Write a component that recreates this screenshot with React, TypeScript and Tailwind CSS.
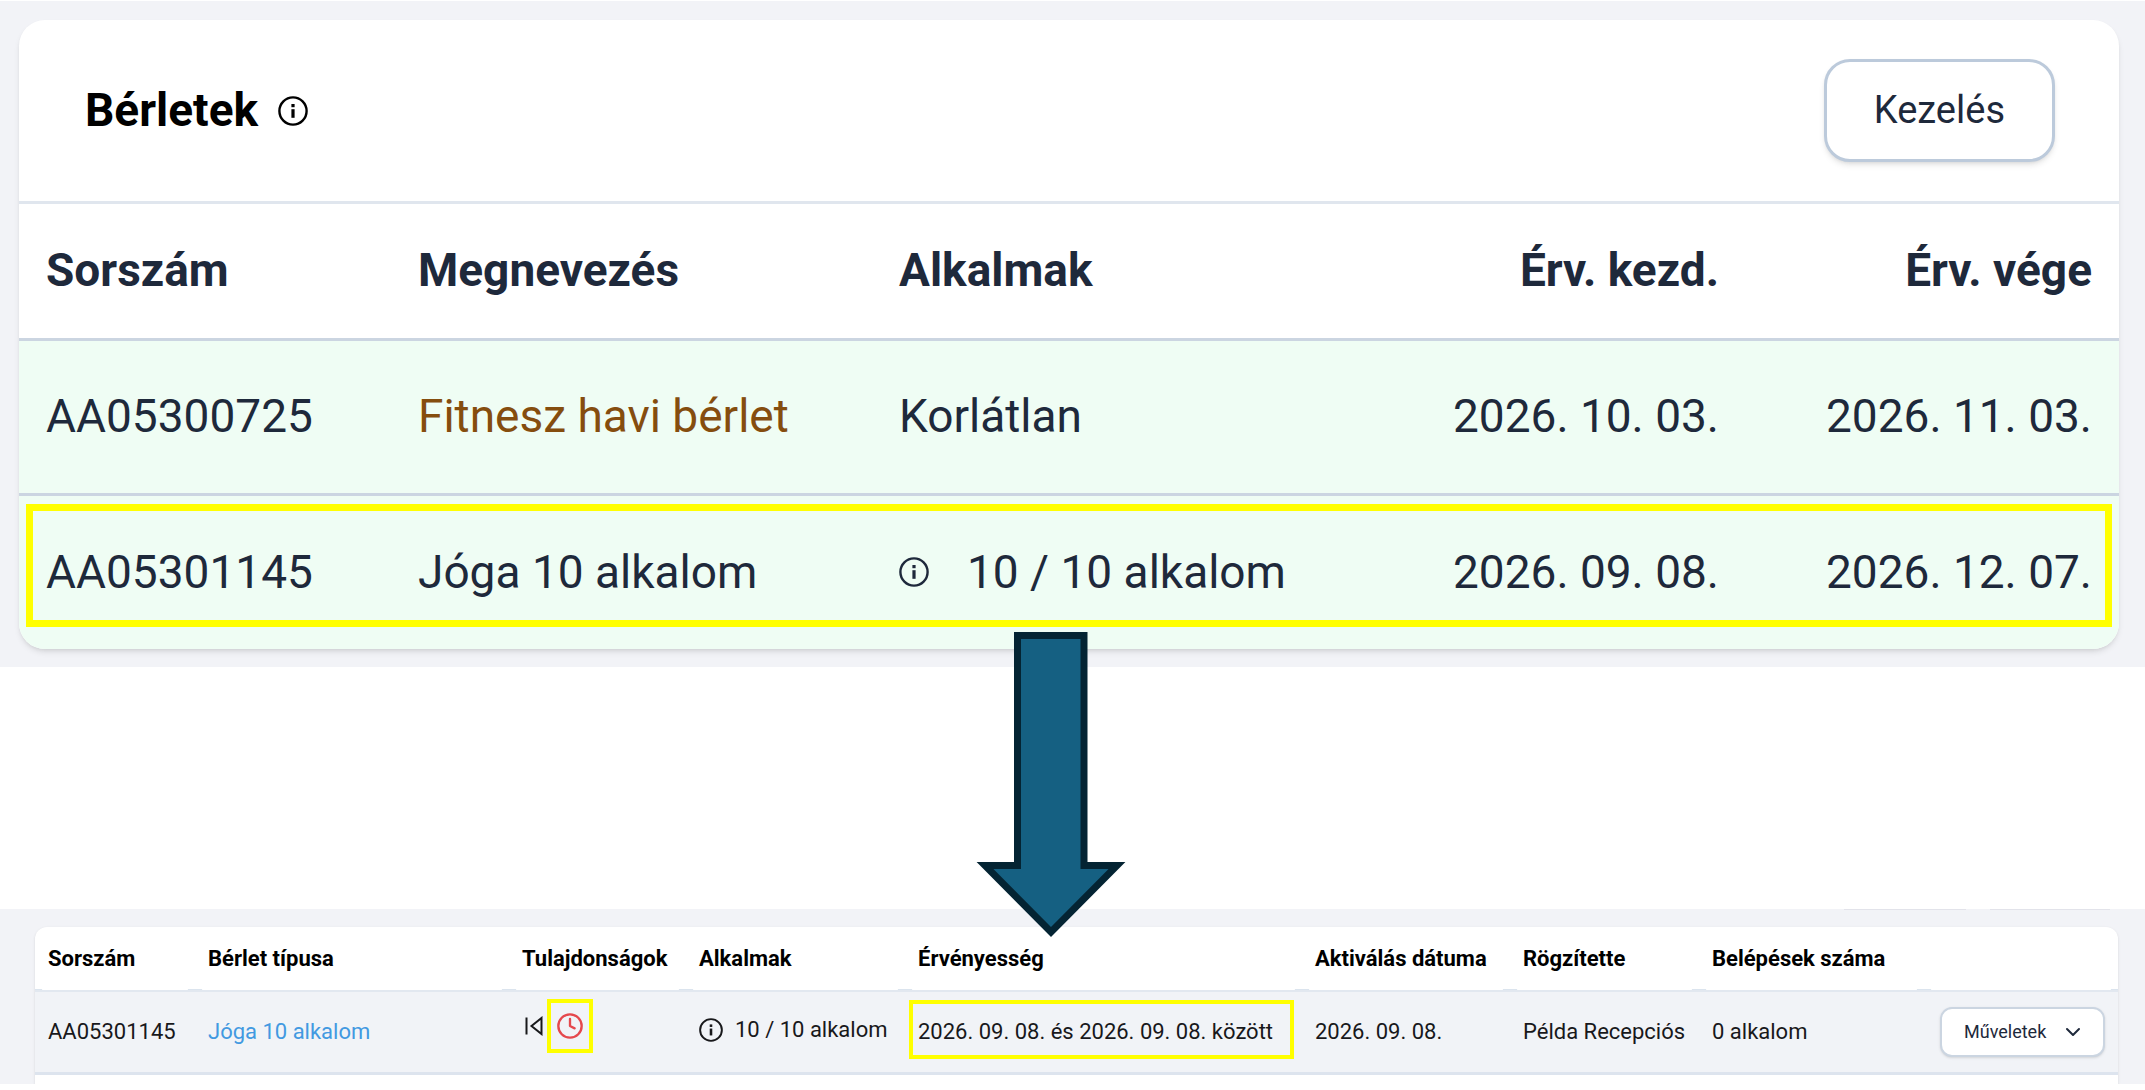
import React from 'react';
import { ChevronDown, Clock } from 'lucide-react';

const passes = [
  { id: 'AA05300725', name: 'Fitnesz havi bérlet', link: true, uses: 'Korlátlan', from: '2026. 10. 03.', to: '2026. 11. 03.' },
  { id: 'AA05301145', name: 'Jóga 10 alkalom', info: true, uses: '10 / 10 alkalom', from: '2026. 09. 08.', to: '2026. 12. 07.' },
];

const detailColumns = [
  { label: 'Sorszám', width: 'w-[160px]' },
  { label: 'Bérlet típusa', width: 'w-[314px]' },
  { label: 'Tulajdonságok', width: 'w-[177px]' },
  { label: 'Alkalmak', width: 'w-[219px]' },
  { label: 'Érvényesség', width: 'w-[397px]' },
  { label: 'Aktiválás dátuma', width: 'w-[208px]' },
  { label: 'Rögzítette', width: 'w-[189px]' },
  { label: 'Belépések száma', width: 'w-[225px]' },
  { label: '', width: 'w-[194px]' },
];

function InfoIcon({ className }: { className: string }) {
  return (
    <svg viewBox="0 0 30 30" fill="none" className={className} aria-hidden="true">
      <circle cx="15" cy="15" r="13.6" stroke="currentColor" strokeWidth="2.4" />
      <rect x="13.4" y="8" width="3.2" height="3.2" fill="currentColor" />
      <rect x="13.4" y="13.2" width="3.2" height="8.6" fill="currentColor" />
    </svg>
  );
}

function PreviousIcon() {
  return (
    <svg viewBox="0 0 18 20" fill="none" stroke="currentColor" strokeWidth="2" className="h-5 w-[18px]" aria-hidden="true">
      <path d="M1.5 1.5v17M16.5 2v16L6.5 10z" />
    </svg>
  );
}

function PassesCard() {
  return (
    <section className="border-t border-white bg-[#f2f3f7] pt-[19px] pr-[26px] pb-[18px] pl-[19px]">
      <div className="relative rounded-[26px] bg-white shadow-md">
        <div className="flex h-[184px] items-center justify-between border-b-3 border-[#e0e6ee] pr-16 pl-[66px]">
          <h2 className="flex items-center gap-5 text-[46px] font-bold text-black">
            Bérletek
            <InfoIcon className="size-[30px]" />
          </h2>
          <button
            type="button"
            className="h-[103px] rounded-[26px] border-3 border-[#bccadb] bg-white px-[47px] text-[38px] text-[#1e293b] shadow-md"
          >
            Kezelés
          </button>
        </div>
        <table className="w-full table-fixed text-[46px] text-[#1e293b]">
          <colgroup>
            <col className="w-[372px]" />
            <col className="w-[481px]" />
            <col />
            <col className="w-[373px]" />
            <col className="w-[373px]" />
          </colgroup>
          <thead>
            <tr className="h-[135px] border-b-3 border-[#cbd5e1] text-left">
              <th className="px-[27px] py-0">Sorszám</th>
              <th className="px-[27px] py-0">Megnevezés</th>
              <th className="px-[27px] py-0">Alkalmak</th>
              <th className="px-[27px] py-0 text-right">Érv. kezd.</th>
              <th className="px-[27px] py-0 text-right">Érv. vége</th>
            </tr>
          </thead>
          <tbody>
            {passes.map((pass) => (
              <tr key={pass.id} className="group h-[155px] border-b-3 border-[#cbd5e1] whitespace-nowrap last:border-0">
                <td className="bg-[#effdf4] px-[27px] group-last:rounded-bl-[26px]">{pass.id}</td>
                <td className="bg-[#effdf4] px-[27px]">
                  {pass.link ? <a href="#" className="text-[#854d0e]">{pass.name}</a> : pass.name}
                </td>
                <td className="bg-[#effdf4] px-[27px]">
                  <div className="flex items-center gap-[38px]">
                    {pass.info && <InfoIcon className="size-[30px]" />}
                    {pass.uses}
                  </div>
                </td>
                <td className="bg-[#effdf4] px-[27px] text-right">{pass.from}</td>
                <td className="bg-[#effdf4] px-[27px] text-right group-last:rounded-br-[26px]">{pass.to}</td>
              </tr>
            ))}
          </tbody>
        </table>
        <div className="pointer-events-none absolute inset-x-[7px] bottom-[22px] h-[123px] border-[7px] border-[#ffff00]" />
      </div>
    </section>
  );
}

function DownArrow() {
  return (
    <div className="relative z-10 h-[242px]">
      <svg viewBox="0 0 150 308" className="absolute -top-9 left-[49%] h-[308px] w-[150px] -translate-x-1/2" aria-hidden="true">
        <path d="M41.5 4.5h66.5v230h33L75 301 9 234.5h32.5z" fill="#156082" stroke="#042433" strokeWidth="7" />
      </svg>
    </div>
  );
}

function DetailCard() {
  return (
    <section className="overflow-hidden bg-[#f2f3f7] pr-[27px] pl-[35px]">
      {/* shadows of the toolbar buttons above the table */}
      <div className="flex h-[18px] justify-end gap-6 pr-2">
        <div className="h-px w-[122px] bg-[#e2e3ea]" />
        <div className="h-px w-[120px] bg-[#e2e3ea]" />
      </div>
      <div className="rounded-t-xl bg-white pb-[9px] shadow-sm">
        <table className="w-full table-fixed text-[22px] whitespace-nowrap text-[#18181b]">
          <thead>
            <tr>
              {detailColumns.map((column) => (
                <th key={column.width} className={`${column.width} border-b-2 border-[#e2e8f0] p-0 text-left text-black`}>
                  <div className="flex h-[62px] items-center px-[13px]">{column.label}</div>
                  <div className="bg-[#dbe4ee] px-[7px]">
                    <div className="h-px rounded-sm bg-white" />
                  </div>
                </th>
              ))}
            </tr>
          </thead>
          <tbody>
            <tr className="h-[82px] border-b-3 border-[#dde4ee] bg-[#f1f3f7]">
              <td className="px-[13px]">AA05301145</td>
              <td className="px-[13px]">
                <a href="#" className="text-[#4299e1]">Jóga 10 alkalom</a>
              </td>
              <td className="px-4">
                <div className="flex items-center gap-1 pb-3">
                  <PreviousIcon />
                  <span className="flex h-[54px] w-[46px] items-center justify-center border-4 border-[#ffff00]">
                    <Clock className="size-7 text-[#e5484d]" strokeWidth={2} />
                  </span>
                </div>
              </td>
              <td className="px-[13px]">
                <div className="flex items-center gap-3 pb-1">
                  <InfoIcon className="size-6" />
                  10 / 10 alkalom
                </div>
              </td>
              <td className="pr-2 pb-1 pl-1">
                <div className="flex h-[59px] items-center border-4 border-[#ffff00] px-[5px] pt-1">
                  2026. 09. 08. és 2026. 09. 08. között
                </div>
              </td>
              <td className="px-[13px]">2026. 09. 08.</td>
              <td className="px-[13px]">Példa Recepciós</td>
              <td className="px-[13px]">0 alkalom</td>
              <td className="px-[13px] text-right">
                <button
                  type="button"
                  className="inline-flex h-[50px] w-[165px] items-center justify-between rounded-xl border-2 border-[#cbd5e1] bg-white px-[22px] align-middle text-[18px] text-[#1e293b] shadow-sm"
                >
                  Műveletek
                  <ChevronDown className="-mr-1 size-6" />
                </button>
              </td>
            </tr>
          </tbody>
        </table>
      </div>
    </section>
  );
}

export default function App() {
  return (
    <main className="min-h-screen bg-white font-[Roboto,sans-serif]">
      <PassesCard />
      <DownArrow />
      <DetailCard />
    </main>
  );
}
